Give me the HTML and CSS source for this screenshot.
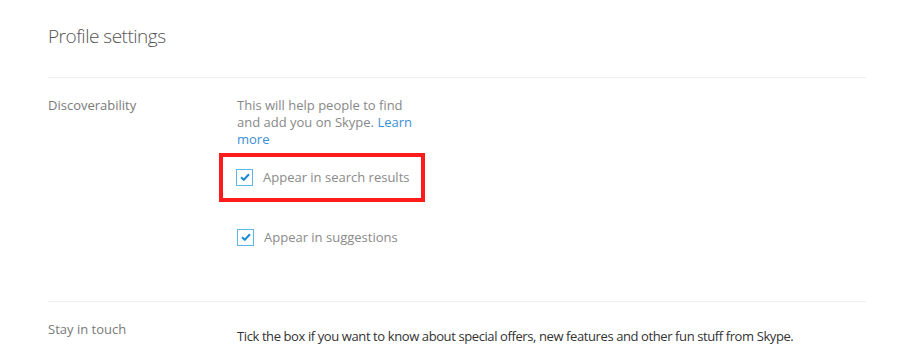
FILE: index.html
```html
<!DOCTYPE html>
<html lang="en">
<head>
    <meta charset="UTF-8">
    <title>Profile settings</title>
    <link rel="stylesheet" href="styles.css">
</head>
<body>
    <div class="page">
        <!-- Header -->
        <h1 class="page-title">Profile settings</h1>

        <!-- Discoverability -->
        <section class="setting">
            <div class="setting-label">Discoverability</div>
            <div class="setting-body">
                <p class="hint">This will help people to find and add you on Skype. <a href="#">Learn more</a></p>
                <div class="highlight">
                    <label class="check">
                        <span class="box"><svg viewBox="0 0 10 8" width="10" height="8"><path d="M1 4.2 L3.8 6.8 L9 1.2" fill="none" stroke="#1a8ad6" stroke-width="2"/></svg></span>
                        Appear in search results
                    </label>
                </div>
                <label class="check">
                    <span class="box"><svg viewBox="0 0 10 8" width="10" height="8"><path d="M1 4.2 L3.8 6.8 L9 1.2" fill="none" stroke="#1a8ad6" stroke-width="2"/></svg></span>
                    Appear in suggestions
                </label>
            </div>
        </section>

        <!-- Stay in touch -->
        <section class="setting">
            <div class="setting-label">Stay in touch</div>
            <div class="setting-body">
                <p class="offers">Tick the box if you want to know about special offers, new features and other fun stuff from Skype.</p>
            </div>
        </section>
    </div>
</body>
</html>
```

FILE: styles.css
```css
body {
    margin: 0;
    padding: 0;
    background-color: #fff;
    font-family: "Open Sans", "Noto Sans", sans-serif;
    color: #777;
}

.page {
    width: 818px;
    margin-left: 48px;
}

.page-title {
    margin: 0;
    padding-top: 22px;
    padding-bottom: 23px;
    height: 32px;
    font-size: 19px;
    font-weight: 300;
    line-height: 28px;
    color: #555;
    letter-spacing: -0.5px;
    border-bottom: 1px solid #edf1f4;
}

/* Setting rows */
.setting {
    display: grid;
    grid-template-columns: 189px 1fr;
    border-bottom: 1px solid #edf1f4;
}

.setting:last-child {
    border-bottom: none;
}

.setting-label {
    font-size: 13px;
    line-height: 17px;
    color: #7a7a7a;
    padding-top: 19px;
}

.setting-body {
    padding-top: 19px;
}

.hint {
    margin: 0;
    width: 180px;
    font-size: 13px;
    line-height: 17px;
    color: #888;
}

.hint a {
    color: #3a8fd6;
    text-decoration: none;
}

/* Red annotation box */
.highlight {
    width: 185px;
    margin-top: 5px;
    margin-left: -18px;
    padding: 8px 0 9px 13px;
    border: 4px solid #fe1b1b;
}

.check {
    display: flex;
    align-items: center;
    gap: 10px;
    height: 24px;
    font-size: 13px;
    color: #8a8a8a;
}

.highlight + .check {
    margin-top: 23px;
    margin-bottom: 52px;
}

.box {
    display: flex;
    align-items: center;
    justify-content: center;
    width: 15px;
    height: 15px;
    border: 1px solid #5cb6e8;
}

.offers {
    margin: 0;
    padding-top: 7px;
    font-size: 13px;
    line-height: 17px;
    letter-spacing: -0.4px;
    color: #333;
}
```
